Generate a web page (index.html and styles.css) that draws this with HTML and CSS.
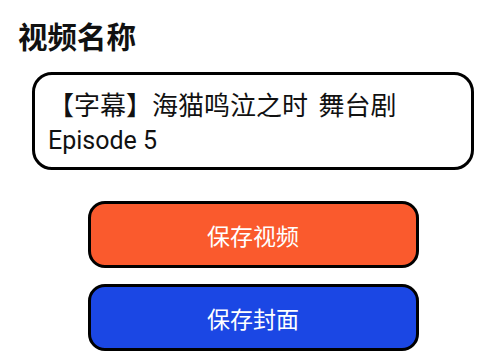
FILE: index.html
```html
<!DOCTYPE html>
<html lang="zh-CN">
<head>
<meta charset="utf-8">
<link rel="stylesheet" href="styles.css">
</head>
<body>
<div class="page">
  <h1 class="title">视频名称</h1>
  <div class="content">
    <div class="name-box">【字幕】海猫鸣泣之时 舞台剧 <span class="latin">Episode 5</span></div>
    <div class="actions">
      <button class="btn btn-video">保存视频</button>
      <button class="btn btn-cover">保存封面</button>
    </div>
  </div>
</div>
</body>
</html>
```
FILE: styles.css
```css
html, body {
  margin: 0;
  padding: 0;
  background: #ffffff;
}
body {
  font-family: Roboto, "Noto Sans CJK SC", sans-serif;
  color: #111111;
}
.page {
  padding: 19px 11px 0 18px;
}
.title {
  margin: 0;
  font-size: 29.5px;
  font-weight: 700;
  line-height: 38px;
}
.content {
  margin-left: 14px;
  margin-top: 15px;
  display: flex;
  flex-direction: column;
}
.name-box {
  box-sizing: border-box;
  height: 98px;
  border: 3px solid #000;
  border-radius: 20px;
  padding: 14px 14px 0 13px;
  font-size: 26px;
  line-height: 34px;
  word-spacing: 4px;
  color: #111;
}
.latin {
  font-size: 25px;
  word-spacing: 0;
}
.actions {
  margin-top: 31px;
  display: flex;
  flex-direction: column;
  align-items: center;
  gap: 16px;
}
.btn {
  box-sizing: border-box;
  width: 331px;
  height: 67px;
  border: 3px solid #000;
  border-radius: 17px;
  color: #fff;
  font-family: Roboto, "Noto Sans CJK SC", sans-serif;
  font-size: 23px;
  padding: 0;
  cursor: pointer;
}
.btn-video {
  background: #fa5a2d;
}
.btn-cover {
  background: #1b47e4;
}
```
